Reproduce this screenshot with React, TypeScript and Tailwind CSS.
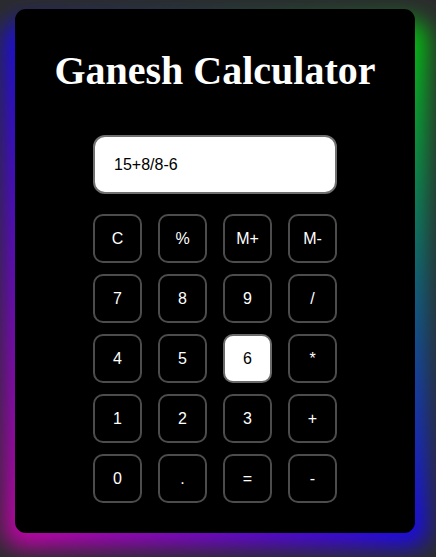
const keys = [
  ["C", "%", "M+", "M-"],
  ["7", "8", "9", "/"],
  ["4", "5", "6", "*"],
  ["1", "2", "3", "+"],
  ["0", ".", "=", "-"],
];

function Key({ label }: { label: string }) {
  // the "6" key is shown in its pressed state
  const active = label === "6";
  return (
    <button
      className={
        active
          ? "h-[49px] w-[49px] rounded-[10px] border-2 border-[#6a6a6a] bg-white text-[16px] text-black"
          : "h-[49px] w-[49px] rounded-[10px] border-2 border-[#4c4c4c] bg-black text-[16px] text-white"
      }
    >
      {label}
    </button>
  );
}

export default function App() {
  const display = "15+8/8-6";

  return (
    <div className="h-[557px] w-[436px] overflow-hidden bg-[#2b2c2d] pl-[15px] pt-[9px] font-['Liberation_Sans',Arial,sans-serif]">
      <div className="relative w-[400px]">
        {/* glow behind the card */}
        <div className="absolute -bottom-[14px] -left-[10px] -right-[12px] top-[12px] rounded-[16px] bg-[linear-gradient(to_top_right,#d400aa,#1808f2_50%,#00d400)] blur-[12px]" />
        <div className="relative flex h-[524px] w-[400px] flex-col items-center rounded-[11px] bg-black">
          <h1 className="mt-[40px] font-['Liberation_Serif','Times_New_Roman',serif] text-[40px] leading-[44px] font-bold text-white">
            Ganesh Calculator
          </h1>
          <div className="mt-[42px] flex h-[59px] w-[244px] items-center rounded-[12px] border-2 border-[#707070] bg-white pl-[19px] text-[16px] text-black">
            {display}
          </div>
          <div className="mt-[20px] grid w-[244px] grid-cols-4 gap-x-[16px] gap-y-[11px]">
            {keys.flat().map((k) => (
              <Key key={k} label={k} />
            ))}
          </div>
        </div>
      </div>
    </div>
  );
}
